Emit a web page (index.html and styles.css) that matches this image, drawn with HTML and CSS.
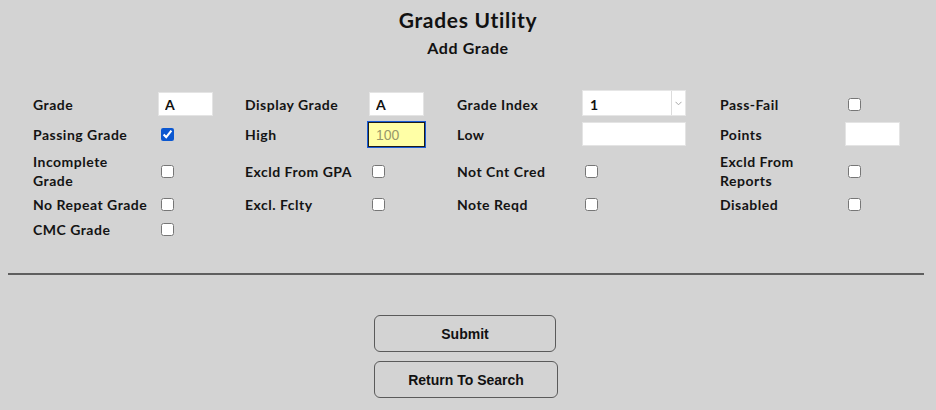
FILE: index.html
```html
<!DOCTYPE html>
<html lang="en">
<head>
<meta charset="utf-8">
<title>Grades Utility</title>
<link rel="stylesheet" href="styles.css">
</head>
<body>
<h1 class="title">Grades Utility</h1>
<h2 class="subtitle">Add Grade</h2>

<form class="grade-form">
  <div class="grid">
    <label class="lbl">Grade</label>
    <div class="cell"><input class="txt short" type="text" value="A"></div>
    <label class="lbl">Display Grade</label>
    <div class="cell"><input class="txt short" type="text" value="A"></div>
    <label class="lbl">Grade Index</label>
    <div class="cell">
      <div class="select-wrap">
        <select class="sel"><option>1</option><option>2</option></select>
        <span class="sel-arrow"><svg width="7" height="5" viewBox="0 0 7 5"><path d="M0.5 0.8 L3.5 3.8 L6.5 0.8" fill="none" stroke="#a8a8a8" stroke-width="1"/></svg></span>
      </div>
    </div>
    <label class="lbl">Pass-Fail</label>
    <div class="cell"><input class="chk" type="checkbox"></div>

    <label class="lbl">Passing Grade</label>
    <div class="cell"><input class="chk" type="checkbox" checked></div>
    <label class="lbl">High</label>
    <div class="cell"><input class="txt short focus" type="text" value="100"></div>
    <label class="lbl">Low</label>
    <div class="cell"><input class="txt wide" type="text"></div>
    <label class="lbl">Points</label>
    <div class="cell"><input class="txt short" type="text"></div>

    <label class="lbl">Incomplete<br>Grade</label>
    <div class="cell"><input class="chk" type="checkbox"></div>
    <label class="lbl">Excld From GPA</label>
    <div class="cell"><input class="chk" type="checkbox"></div>
    <label class="lbl">Not Cnt Cred</label>
    <div class="cell"><input class="chk" type="checkbox"></div>
    <label class="lbl">Excld From<br>Reports</label>
    <div class="cell"><input class="chk" type="checkbox"></div>

    <label class="lbl">No Repeat Grade</label>
    <div class="cell"><input class="chk" type="checkbox"></div>
    <label class="lbl">Excl. Fclty</label>
    <div class="cell"><input class="chk" type="checkbox"></div>
    <label class="lbl">Note Reqd</label>
    <div class="cell"><input class="chk" type="checkbox"></div>
    <label class="lbl">Disabled</label>
    <div class="cell"><input class="chk" type="checkbox"></div>

    <label class="lbl">CMC Grade</label>
    <div class="cell"><input class="chk" type="checkbox"></div>
  </div>

  <hr class="divider">

  <div class="actions">
    <button class="btn btn-submit" type="button">Submit</button>
    <button class="btn btn-return" type="button">Return To Search</button>
  </div>
</form>
</body>
</html>
```
FILE: styles.css
```css
html {
  background: #d3d3d3;
}
body {
  margin: 8px;
  font-family: Lato, "Open Sans", sans-serif;
  color: #111;
}
.title {
  margin: 0;
  text-align: center;
  font-size: 21px;
  line-height: 24px;
  font-weight: 700;
  letter-spacing: 0.7px;
}
.subtitle {
  margin: 6px 0 0;
  text-align: center;
  font-size: 16px;
  line-height: 20px;
  font-weight: 700;
  letter-spacing: 0.6px;
}
.grade-form {
  margin: 32px 0 0;
}
.grid {
  display: grid;
  grid-template-columns: 125px 87px 124px 88px 125px 138px 125px 1fr;
  grid-template-rows: 28px 32px 42px 24px 26px;
  align-items: center;
  padding-left: 25px;
}
.lbl {
  font-size: 14px;
  line-height: 19px;
  font-weight: 700;
  letter-spacing: 0.5px;
  color: #141414;
}
.cell {
  display: flex;
  align-items: center;
}
.txt {
  box-sizing: border-box;
  height: 24px;
  border: 1px solid #e4e4e4;
  background: #fff;
  padding: 0 6px;
  font-family: Lato, "Open Sans", sans-serif;
  font-size: 14px;
  font-weight: 700;
  color: #111;
  outline: none;
}
.short {
  width: 55px;
}
.wide {
  width: 104px;
}
.focus {
  width: 57px;
  height: 25px;
  margin-left: -1px;
  background: #ffffa6;
  border: 1px solid #1c1c1c;
  box-shadow: 0 0 0 1px #1a5cd6;
  color: #98986a;
  font-family: "Liberation Sans", Arial, sans-serif;
  font-weight: 400;
  font-size: 14px;
  padding: 0 0 0 7px;
  margin-top: 1px;
}
.chk {
  width: 13px;
  height: 13px;
  margin: 0 0 0 3px;
  accent-color: #0b57d0;
}
.select-wrap {
  position: relative;
  width: 104px;
  height: 26px;
  margin-top: -2px;
}
.sel {
  appearance: none;
  -webkit-appearance: none;
  box-sizing: border-box;
  width: 104px;
  height: 26px;
  border: 1px solid #e6e6e6;
  border-radius: 0;
  background: #fff;
  padding: 2px 0 0 7px;
  font-family: Lato, "Open Sans", sans-serif;
  font-size: 14px;
  font-weight: 700;
  color: #111;
  outline: none;
}
.sel-arrow {
  position: absolute;
  top: 1px;
  right: 1px;
  bottom: 1px;
  width: 13px;
  border-left: 1px solid #dcdcdc;
  display: flex;
  align-items: center;
  justify-content: center;
  pointer-events: none;
}
.divider {
  width: 916px;
  height: 2px;
  margin: 31px 0 0;
  border: 0;
  background: #5e5e5e;
}
.actions {
  display: flex;
  flex-direction: column;
  align-items: flex-start;
  gap: 9px;
  margin: 40px 0 0 366px;
}
.btn {
  height: 37px;
  border: 1px solid #5a5a5a;
  border-radius: 6px;
  background: #d3d3d3;
  font-family: "Liberation Sans", Arial, sans-serif;
  font-size: 14px;
  font-weight: 700;
  color: #111;
}
.btn-submit {
  width: 182px;
}
.btn-return {
  width: 184px;
}
```
